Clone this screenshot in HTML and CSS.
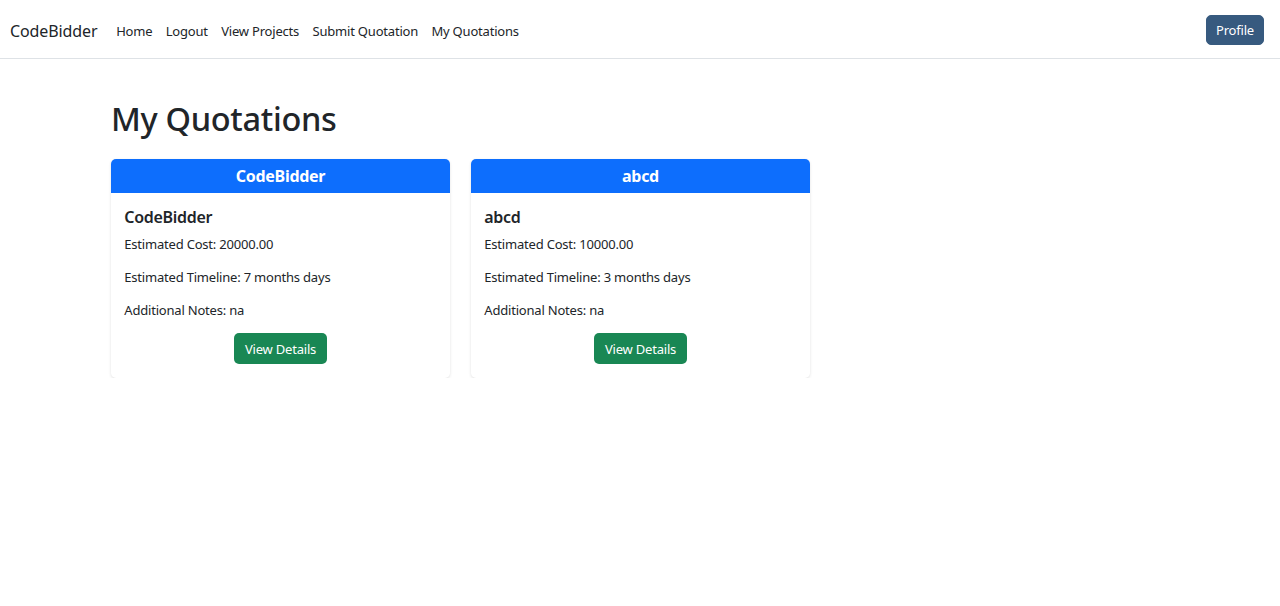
FILE: index.html
```html
<!DOCTYPE html>
<html lang="en">
<head>
<meta charset="utf-8">
<title>My Quotations</title>
<link rel="stylesheet" href="styles.css">
</head>
<body>
<nav class="navbar">
  <div class="nav-left">
    <a class="brand" href="#">CodeBidder</a>
    <ul class="nav-links">
      <li><a href="#">Home</a></li>
      <li><a href="#">Logout</a></li>
      <li><a href="#">View Projects</a></li>
      <li><a href="#">Submit Quotation</a></li>
      <li><a href="#">My Quotations</a></li>
    </ul>
  </div>
  <button class="btn-profile">Profile</button>
</nav>
<main class="container">
  <h1 class="page-title">My Quotations</h1>
  <div class="cards">
    <div class="card">
      <div class="card-header">CodeBidder</div>
      <div class="card-body">
        <h5 class="card-title">CodeBidder</h5>
        <p>Estimated Cost: 20000.00</p>
        <p>Estimated Timeline: 7 months days</p>
        <p>Additional Notes: na</p>
        <div class="card-actions"><a class="btn-success" href="#">View Details</a></div>
      </div>
    </div>
    <div class="card">
      <div class="card-header">abcd</div>
      <div class="card-body">
        <h5 class="card-title">abcd</h5>
        <p>Estimated Cost: 10000.00</p>
        <p>Estimated Timeline: 3 months days</p>
        <p>Additional Notes: na</p>
        <div class="card-actions"><a class="btn-success" href="#">View Details</a></div>
      </div>
    </div>
  </div>
</main>
</body>
</html>
```
FILE: styles.css
```css
* { box-sizing: border-box; }
html, body { margin: 0; padding: 0; }
body {
  font-family: "Noto Sans", "Open Sans", sans-serif;
  font-size: 13px;
  letter-spacing: -0.2px;
  line-height: 20px;
  color: #212529;
  background: #fff;
}
a { text-decoration: none; color: inherit; }

.navbar {
  height: 59px;
  border-bottom: 1px solid #dee2e6;
  display: flex;
  align-items: center;
  justify-content: space-between;
  padding: 1px 16px 0 10px;
}
.nav-left { display: flex; align-items: center; padding-top: 2px; }
.brand {
  font-size: 16px;
  letter-spacing: -0.1px;
  color: #212529;
  margin-right: 12px;
}
.nav-links {
  list-style: none;
  display: flex;
  margin: 0;
  padding: 0;
}
.nav-links a {
  display: block;
  padding: 6px 6.7px;
  color: #212529;
  letter-spacing: -0.2px;
}
.btn-profile {
  font-family: inherit;
  font-size: 13px;
  letter-spacing: -0.2px;
  line-height: 20px;
  color: #fff;
  background: #375a7f;
  border: 1px solid #375a7f;
  border-radius: 5px;
  padding: 4px 9px;
  cursor: pointer;
}

.container {
  padding: 0 0 0 111px;
}
.page-title {
  font-size: 32.5px;
  letter-spacing: -0.3px;
  font-weight: 500;
  line-height: 40px;
  margin: 40px 0 20px;
}
.cards {
  display: flex;
  gap: 21px;
}
.card {
  width: 339px;
  border-radius: 5px;
  background: #fff;
  box-shadow: 0 1px 3px rgba(0,0,0,0.12);
  overflow: hidden;
}
.card-header {
  background: #0d6efd;
  color: #fff;
  text-align: center;
  font-weight: 700;
  font-size: 16px;
  letter-spacing: -0.3px;
  line-height: 20px;
  padding: 7px 13px;
}
.card-body {
  padding: 13.3px 13.3px 14px;
}
.card-title {
  font-size: 16px;
  letter-spacing: -0.3px;
  font-weight: 600;
  line-height: 20px;
  margin: 1px 0 7px;
}
.card-body p {
  margin: 0 0 13px;
}
.card-actions { text-align: center; }
.btn-success {
  display: inline-block;
  background: #198754;
  color: #fff;
  border-radius: 5px;
  padding: 5.5px 11px;
  line-height: 20px;
}
```
